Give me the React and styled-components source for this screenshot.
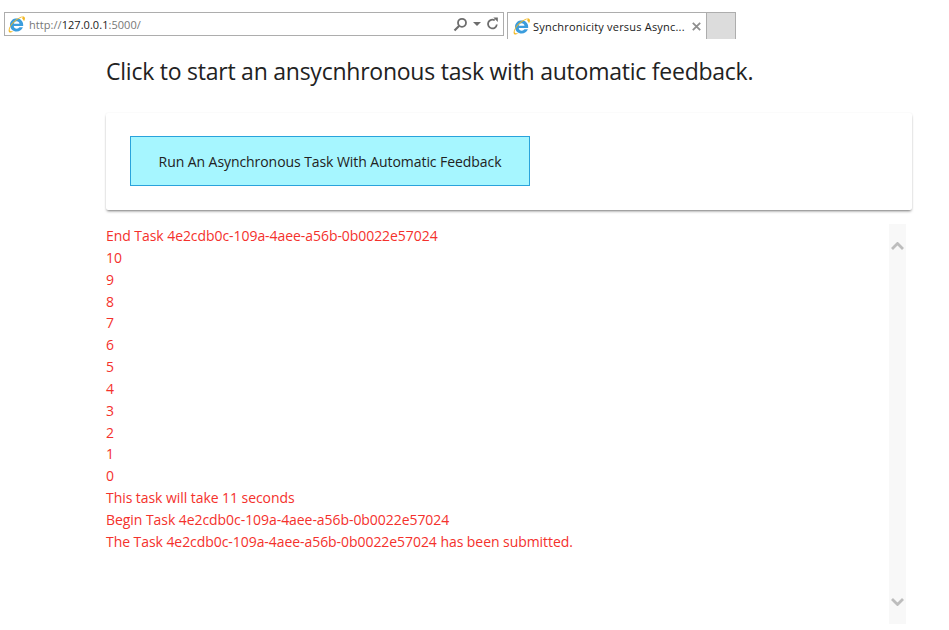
import React from 'react'
import styled, { createGlobalStyle } from 'styled-components'

const GlobalStyle = createGlobalStyle`
	html, body {
		margin: 0;
		padding: 0;
		background: #fff;
		overflow: hidden;
	}
	body {
		font-family: 'Open Sans', 'Noto Sans', sans-serif;
	}
`

const Page = styled.div`
	width: 949px;
	height: 630px;
	overflow: hidden;
`

const BrowserBar = styled.div`
	display: flex;
	align-items: flex-start;
	height: 39px;
	padding: 12px 0 0 4px;
	box-sizing: border-box;
`

const AddressBar = styled.div`
	width: 500px;
	height: 24px;
	box-sizing: border-box;
	border: 1px solid #adadad;
	display: flex;
	align-items: center;
	padding: 0 4px 0 3px;
	margin-right: 3px;
`

const Url = styled.span`
	flex: 1;
	margin-left: 4px;
	font-size: 11px;
	letter-spacing: 0.05px;
	color: #777;
	b {
		font-weight: 400;
		color: #222;
	}
`

const AddressTools = styled.div`
	display: flex;
	align-items: center;
	gap: 5px;
`

const Tab = styled.div`
	width: 200px;
	height: 27px;
	box-sizing: border-box;
	border: 1px solid #adadad;
	border-bottom: none;
	display: flex;
	align-items: center;
	padding: 1px 5px 0 5px;
`

const TabTitle = styled.span`
	flex: 1;
	margin-left: 3px;
	font-size: 11px;
	letter-spacing: 0.2px;
	color: #1a1a1a;
	white-space: nowrap;
`

const NewTab = styled.div`
	width: 29px;
	height: 27px;
	box-sizing: border-box;
	background: #dcdcdc;
	border: 1px solid #adadad;
	border-left: none;
	border-bottom: none;
`

const Content = styled.main`
	padding-left: 106px;
	width: 806px;
`

const Heading = styled.h1`
	margin: 0;
	padding-top: 15px;
	height: 59px;
	box-sizing: border-box;
	font-size: 23px;
	line-height: 34px;
	font-weight: 400;
	letter-spacing: -0.24px;
	color: #222;
	white-space: nowrap;
`

const Card = styled.section`
	height: 97px;
	margin-top: 15px;
	padding: 23px 24px 0;
	box-sizing: border-box;
	background: #fff;
	border-radius: 2px;
	box-shadow: 0 2px 3px -1px rgba(0, 0, 0, 0.55), 0 0 2px rgba(0, 0, 0, 0.07);
`

const RunButton = styled.button`
	display: block;
	width: 400px;
	height: 50px;
	padding: 0;
	box-sizing: border-box;
	background: #a6f6ff;
	border: 1px solid #29a3dc;
	border-radius: 0;
	color: #222;
	font-family: inherit;
	font-size: 14px;
	letter-spacing: -0.07px;
`

const LogPanel = styled.div`
	display: flex;
	justify-content: space-between;
	height: 400px;
	margin-top: 14px;
	width: 800px;
`

const Log = styled.div`
	padding-top: 1px;
	color: #f4312c;
	font-size: 14px;
	line-height: 21.85px;
	letter-spacing: -0.06px;
	white-space: nowrap;
`

const ScrollTrack = styled.div`
	width: 17px;
	background: #f8f8f8;
	display: flex;
	flex-direction: column;
	justify-content: space-between;
	align-items: center;
	padding: 18px 0 18px;
	box-sizing: border-box;
`

const Favicon = () => (
	<svg width="17" height="17" viewBox="0 0 17 17">
		<path d="M8.700 2.300C5 2.300 2 5.200 2 8.900s3 6.600 6.700 6.600c2.900 0 5.200-1.600 6.200-4.200h-3.500c-.6.900-1.500 1.400-2.600 1.400-1.600 0-2.900-1.100-3-2.800h9.300c.1-.3.100-.7.100-1 0-3.700-2.900-6.600-7-6.600zM5.800 7.700c.2-1.500 1.400-2.500 2.900-2.500s2.700 1 2.800 2.500H5.800z" fill="#3b9ddd" />
		<path d="M1.200 16.200C-.5 14.600 1.500 9.800 5.400 5.800 9.800 1.400 14.700-.5 16.400.9c1 .9.600 2.600-.4 4.400-.4-1.300-1.100-2.200-1.900-2.800 1-1.100.5-1.600-.9-1.100C10.800 2.300 7.600 4.600 4.900 7.500 2.300 10.300 1 13.600 2 14.800c.7.800 2.200.7 3.800 0-1.900 1.700-3.600 2.300-4.600 1.400z" fill="#f2b824" />
	</svg>
)

const SearchIcon = () => (
	<svg width="15" height="15" viewBox="0 0 15 15" fill="none" stroke="#6d6d6d" strokeWidth="1.800">
		<circle cx="9" cy="5.800" r="4" />
		<path d="M6 9 1.500 13.500" strokeWidth="2.200" />
	</svg>
)

const DropArrow = () => (
	<svg width="8" height="4" viewBox="0 0 8 4">
		<path d="M0 0h8L4 4z" fill="#6d6d6d" />
	</svg>
)

const RefreshIcon = () => (
	<svg width="13" height="14" viewBox="0 0 13 14" fill="none">
		<path d="M10.800 7.500a4.400 4.400 0 1 1-2-4.200" stroke="#6d6d6d" strokeWidth="1.800" />
		<path d="M7.300.600h4.500v4.500z" fill="#6d6d6d" />
	</svg>
)

const CloseIcon = () => (
	<svg width="9" height="9" viewBox="0 0 9 9" stroke="#8f8f8f" strokeWidth="1.800">
		<path d="M.8.800l7.400 7.400M8.200.800.800 8.200" />
	</svg>
)

const Chevron = ({ down }) => (
	<svg width="13" height="8" viewBox="0 0 13 8" fill="none" stroke="#bdbdbd" strokeWidth="2.800">
		<path d={down ? 'M1 1l5.500 5.500L12 1' : 'M1 7l5.500-5.500L12 7'} />
	</svg>
)

const LOG_LINES = [
	'End Task 4e2cdb0c-109a-4aee-a56b-0b0022e57024',
	'10', '9', '8', '7', '6', '5', '4', '3', '2', '1', '0',
	'This task will take 11 seconds',
	'Begin Task 4e2cdb0c-109a-4aee-a56b-0b0022e57024',
	'The Task 4e2cdb0c-109a-4aee-a56b-0b0022e57024 has been submitted.',
]

export default function App() {
	return (
		<Page>
			<GlobalStyle />
			<BrowserBar>
				<AddressBar>
					<Favicon />
					<Url>http://<b>127.0.0.1</b>:5000/</Url>
					<AddressTools>
						<SearchIcon />
						<DropArrow />
						<RefreshIcon />
					</AddressTools>
				</AddressBar>
				<Tab>
					<Favicon />
					<TabTitle>Synchronicity versus Async...</TabTitle>
					<CloseIcon />
				</Tab>
				<NewTab />
			</BrowserBar>
			<Content>
				<Heading>Click to start an ansycnhronous task with automatic feedback.</Heading>
				<Card>
					<RunButton>Run An Asynchronous Task With Automatic Feedback</RunButton>
				</Card>
				<LogPanel>
					<Log>
						{LOG_LINES.map((line, i) => <div key={i}>{line}</div>)}
					</Log>
					<ScrollTrack>
						<Chevron />
						<Chevron down />
					</ScrollTrack>
				</LogPanel>
			</Content>
		</Page>
	)
}
